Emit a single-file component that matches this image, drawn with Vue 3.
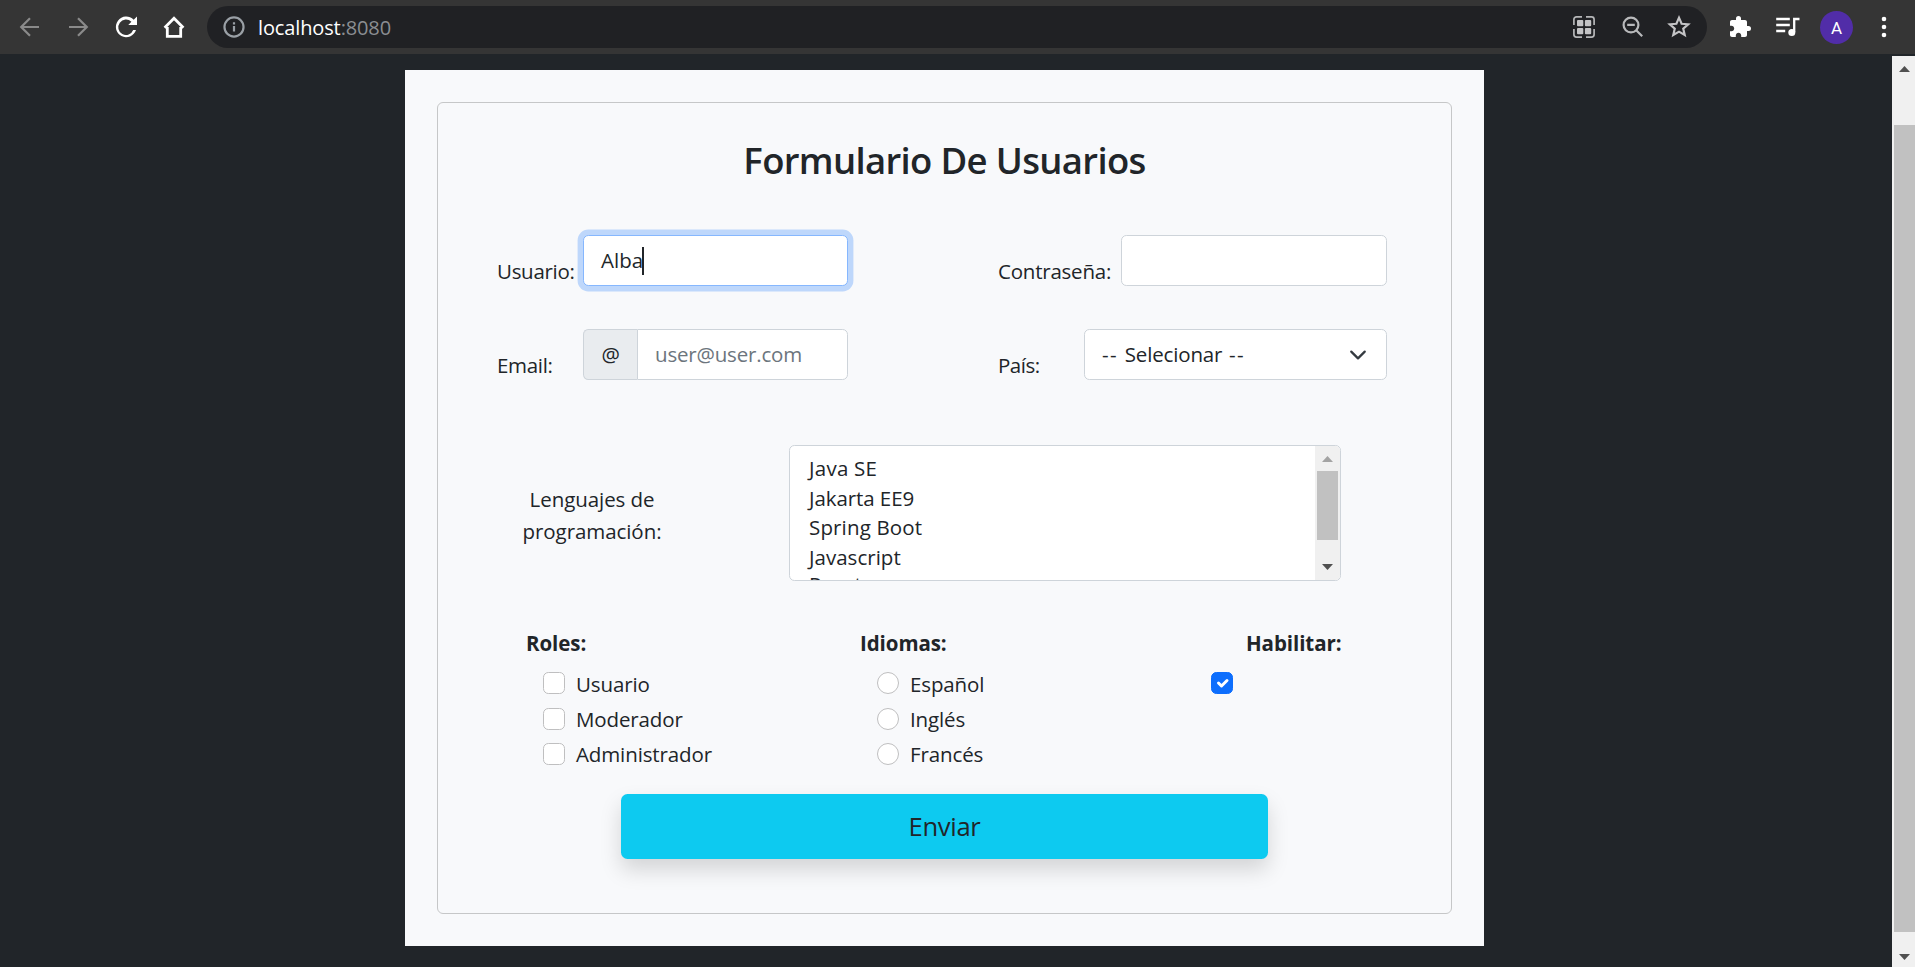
<script setup>
const languages = [
  { name: 'Java SE', fit: 'f-java' },
  { name: 'Jakarta EE9', fit: 'f-jakarta' },
  { name: 'Spring Boot', fit: 'f-spring' },
  { name: 'Javascript', fit: 'f-script' },
  { name: 'React', fit: 'f-script' }
]
const roles = ['Usuario', 'Moderador', 'Administrador']
const idiomas = ['Español', 'Inglés', 'Francés']
</script>

<template>
  <div class="window">
    <header class="toolbar">
      <svg class="ico nav dim" viewBox="0 0 24 24"><path d="M21 12H3.500M12 3.200 3.200 12l8.800 8.800" /></svg>
      <svg class="ico nav dim" viewBox="0 0 24 24"><path d="M3 12h17.500M12 3.200 20.800 12 12 20.800" /></svg>
      <svg class="ico nav fill" viewBox="0 0 24 24"><path d="M19.700 4.850A10.300 10.300 0 1 0 22 15h-2.800a7.700 7.700 0 1 1-1.800-8.200L14.300 10H23V1.500z" /></svg>
      <svg class="ico nav home" viewBox="0 0 24 24"><path d="M5.300 12v9.300h13.400V12M2.600 12.700 12 3.200l9.400 9.500" /></svg>
      <div class="omnibox">
        <svg class="ico info" viewBox="0 0 24 24"><circle cx="12" cy="12" r="10.400" /><path d="M12 11v6M12 6.800v2.400" /></svg>
        <span class="url">localhost<i>:8080</i></span>
        <svg class="ico qr" viewBox="0 0 24 24">
          <path class="ln" d="M1.900 10V4.500a2.600 2.600 0 0 1 2.600-2.600H10M14 1.900h5.500a2.600 2.600 0 0 1 2.600 2.600V10M22.100 14v5.500a2.600 2.600 0 0 1-2.600 2.600H14M10 22.100H4.500a2.600 2.600 0 0 1-2.600-2.600V14" />
          <g class="fl">
            <rect x="5" y="5" width="6.300" height="6.300" rx="1" /><rect x="12.900" y="5" width="6.300" height="6.300" rx="1" />
            <rect x="5" y="12.900" width="6.300" height="6.300" rx="1" /><rect x="12.900" y="12.900" width="6.300" height="6.300" rx="1" />
          </g>
        </svg>
        <svg class="ico zoom" viewBox="0 0 22 22"><circle cx="9" cy="9" r="7.400" /><path d="M14.200 14.200l6 6M5.200 8.800h7.600" /></svg>
        <svg class="ico star" viewBox="0 0 24 24"><path d="M12 3.400l2.400 5.600 6.100.5-4.600 4 1.400 5.900L12 16.300l-5.300 3.100 1.400-5.900-4.600-4 6.100-.5z" /></svg>
      </div>
      <svg class="ico puzzle" viewBox="0 0 24 24"><path d="M20.500 11H19V7c0-1.100-.9-2-2-2h-4V3.500a2.500 2.500 0 0 0-5 0V5H4c-1.100 0-1.990.9-1.990 2v3.800H3.500c1.490 0 2.700 1.210 2.700 2.700s-1.210 2.700-2.700 2.700H2V20c0 1.100.9 2 2 2h3.800v-1.500c0-1.490 1.210-2.700 2.700-2.700s2.700 1.210 2.700 2.700V22H17c1.100 0 2-.9 2-2v-4h1.500a2.500 2.500 0 0 0 0-5z" /></svg>
      <svg class="ico music" viewBox="0 0 26 22"><path class="ln" d="M1.200 3h13.600M1.200 9h13.600M1.200 15h9" /><path class="ln" d="M19.200 16V3h5.300" /><circle cx="16.800" cy="16.500" r="3.500" /></svg>
      <div class="avatar">A</div>
      <svg class="ico dots" viewBox="0 0 6 24"><circle cx="3" cy="4" r="2.300" /><circle cx="3" cy="12" r="2.300" /><circle cx="3" cy="20" r="2.300" /></svg>
    </header>

    <div class="viewport">
      <main class="page">
        <section class="card">
          <div class="frame">
            <h1><span>Formulario De Usuarios</span></h1>

            <div class="row">
              <div class="field left">
                <label>Usuario:</label>
                <div class="control focused"><span class="typed">Alba</span><b class="caret"></b></div>
              </div>
              <div class="field right">
                <label class="wide">Contraseña:</label>
                <div class="control"></div>
              </div>
            </div>

            <div class="row second">
              <div class="field left">
                <label>Email:</label>
                <div class="group">
                  <div class="addon">@</div>
                  <div class="control joined"><span class="placeholder">user@user.com</span></div>
                </div>
              </div>
              <div class="field right">
                <label class="tight">País:</label>
                <div class="control select">
                  <span class="value"><i>-- </i>Selecionar<i> --</i></span>
                  <svg viewBox="0 0 16 16"><path d="M2 5l6 6 6-6" /></svg>
                </div>
              </div>
            </div>

            <div class="languages">
              <div class="caption">Lenguajes de<br />programación:</div>
              <div class="listbox">
                <ul>
                  <li v-for="l in languages" :key="l.name"><span :class="l.fit">{{ l.name }}</span></li>
                </ul>
                <div class="bar">
                  <svg viewBox="0 0 11 6"><path fill="#a3a3a3" d="M0 6 5.500 0 11 6z" /></svg>
                  <div class="thumb"></div>
                  <svg class="down" viewBox="0 0 11 6"><path fill="#505050" d="M0 0h11L5.500 6z" /></svg>
                </div>
              </div>
            </div>

            <div class="choices">
              <div class="choice">
                <strong>Roles:</strong>
                <div v-for="r in roles" :key="r" class="option"><i class="box"></i><span>{{ r }}</span></div>
              </div>
              <div class="choice">
                <strong>Idiomas:</strong>
                <div v-for="i in idiomas" :key="i" class="option"><i class="box round"></i><span>{{ i }}</span></div>
              </div>
              <div class="choice enable">
                <strong>Habilitar:</strong>
                <div class="option">
                  <i class="box checked"><svg viewBox="0 0 20 20"><path d="M6.500 10l3 3 5.500-5.500" /></svg></i>
                </div>
              </div>
            </div>

            <div class="submit">Enviar</div>
          </div>
        </section>
      </main>
      <aside class="page-bar">
        <svg viewBox="0 0 11 6"><path fill="#505050" d="M0 6 5.500 0 11 6z" /></svg>
        <div class="thumb"></div>
        <svg class="down" viewBox="0 0 11 6"><path fill="#505050" d="M0 0h11L5.500 6z" /></svg>
      </aside>
    </div>
  </div>
</template>

<style>
body { background: #212529; overflow: hidden; }
</style>

<style scoped>
* { box-sizing: border-box; }
.window {
  width: 1915px; height: 967px; display: flex; flex-direction: column; overflow: hidden;
  background: #212529; color: #212529;
  font-family: "Open Sans", "Noto Sans", sans-serif; font-size: 20.500px; letter-spacing: -0.300px; white-space: nowrap;
}
svg { display: block; flex: none; overflow: visible; }

.toolbar { height: 54px; flex: none; display: flex; align-items: center; background: #353535; padding-left: 18px; }
.ico { width: 24px; height: 24px; fill: none; stroke: #fff; stroke-width: 2.400; }
.nav { margin-right: 24px; }
.dim { stroke: #8a8a8a; stroke-width: 2.200; }
.fill { fill: #fff; stroke: none; }
.home { stroke-width: 2.800; margin-right: 21px; }
.omnibox { width: 1500px; height: 42px; flex: none; border-radius: 21px; background: #202124; display: flex; align-items: center; padding-left: 16px; }
.info { width: 22px; height: 22px; stroke: #9aa0a6; }
.url { flex: none; margin-left: 13px; width: 1301px; color: #fff; font-size: 20px; letter-spacing: -0.130px; line-height: 40px; padding-top: 1px; }
.url i { font-style: normal; color: #8b8e92; }
.qr { width: 24px; stroke: #b5b6b8; margin-left: 13px; }
.qr .ln { stroke-width: 1.700; }
.qr .fl { fill: #c4c4c6; stroke: none; }
.zoom { margin-left: 26px; width: 22px; height: 22px; stroke: #b8b9bb; stroke-width: 2.200; }
.star { margin-left: 22px; width: 26px; height: 26px; stroke: #c4c4c6; stroke-width: 2; }
.puzzle { margin-left: 21px; fill: #fff; stroke: none; }
.music { margin-left: 23px; width: 26px; height: 22px; }
.music .ln { stroke-width: 2.300; }
.music circle { fill: #fff; stroke: none; }
.avatar { margin-left: 19px; width: 33px; height: 33px; border-radius: 50%; background: #512da8; color: #fff; text-align: center; font: 17px/34px Roboto, sans-serif; letter-spacing: 0; }
.dots { width: 6px; height: 24px; margin-left: 28px; fill: #fff; stroke: none; }

.viewport { flex: 1; display: flex; padding-top: 2px; }
.page { width: 1892px; padding: 14px 0 0 405px; }
.card { width: 1079px; height: 876px; background: #f8f9fb; padding: 32px; }
.frame { height: 812px; border: 1px solid #c6c7c8; border-radius: 6px; padding-top: 34px; }
h1 { margin: 0 0 52px; height: 46px; line-height: 46px; font-size: 36.500px; font-weight: 600; text-align: center; letter-spacing: -0.670px; }

.row { display: flex; padding-left: 60px; height: 51px; }
.second { margin-top: 43px; }
.field { display: flex; }
.left { width: 350px; margin-right: 151px; }
.right { width: 388px; }
label { width: 85px; padding-top: 20px; line-height: 32px; height: 51px; text-indent: -1px; }
.wide { width: 122px; letter-spacing: -0.220px; }
.tight { letter-spacing: -0.500px; }
.control { flex: 1; display: flex; align-items: center; height: 51px; line-height: 49px; background: #fff; border: 1px solid #ced4da; border-radius: 5.400px; padding-left: 17px; }
.typed { letter-spacing: 0.050px; }
.focused { border-color: #86b7fe; box-shadow: 0 0 0 5.400px #bed7fb; }
.caret { width: 2px; height: 28px; background: #212529; margin-left: -1px; }
.group { flex: 1; display: flex; }
.addon { width: 54px; height: 51px; line-height: 49px; text-align: center; background: #e9ecef; border: 1px solid #ced4da; border-right: 0; border-radius: 5.400px 0 0 5.400px; }
.joined { border-radius: 0 5.400px 5.400px 0; padding-left: 17px; }
.placeholder { color: #6c757d; letter-spacing: -0.180px; }
.value { white-space: pre; letter-spacing: -0.150px; }
.value i { font-style: normal; letter-spacing: 1.400px; }
.select svg { width: 18px; height: 18px; margin-left: auto; margin-right: 19px; }
.select path { fill: none; stroke: #343a40; stroke-width: 2; stroke-linecap: round; stroke-linejoin: round; }

.languages { display: flex; margin-top: 65px; padding-left: 60px; height: 136px; }
.caption { width: 188px; margin-right: 103px; padding-top: 38px; line-height: 32px; text-align: center; letter-spacing: -0.070px; }
.listbox { width: 552px; height: 136px; display: flex; overflow: hidden; background: #fff; border: 1px solid #ced4da; border-radius: 5.400px; }
ul { flex: 1; margin: 0; padding: 8px 0 0 19px; list-style: none; }
li { height: 29.500px; line-height: 29.500px; }
li:last-child { margin-top: -2px; }
.f-java { letter-spacing: 0.250px; }
.f-jakarta { letter-spacing: -0.080px; }
.f-spring { letter-spacing: 0.150px; }
.f-script { letter-spacing: 0.020px; }
.bar { width: 25px; background: #f0f0f0; padding: 10px 2px 10px; display: flex; flex-direction: column; align-items: center; }
.bar svg, .page-bar svg { width: 11px; height: 6px; }
.bar .thumb { width: 21px; height: 69px; margin-top: 9px; background: #c1c1c1; }
.down { margin-top: auto; }

.choices { display: flex; height: 145px; margin-top: 46px; padding-left: 89px; }
.choice { width: 334px; flex: none; }
.enable { width: 200px; }
strong { display: block; height: 40px; line-height: 32px; font-weight: 700; letter-spacing: -0.080px; text-indent: -1px; }
.option { display: flex; height: 35.200px; line-height: 35.200px; padding: 0 0 0 16px; letter-spacing: -0.120px; }
.box { width: 22px; height: 22px; margin: 5.400px 11px 0 0; border: 1px solid #bfbfc0; border-radius: 5.400px; background: #fff; }
.round { border-radius: 50%; }
.checked { background: #0d6efd; border-color: #0d6efd; }
.checked path { fill: none; stroke: #fff; stroke-width: 3; stroke-linecap: round; stroke-linejoin: round; }
.enable strong { padding-left: 52px; }

.submit { width: 647px; height: 65px; margin: 22px 0 0 183px; line-height: 66px; text-align: center; background: #0dcaf0; border-radius: 6.500px; box-shadow: 0 10.800px 21.600px rgba(0, 0, 0, 0.150); font-size: 25.600px; }

.page-bar { width: 23px; background: #f0f0f0; padding: 10px 0 7px 2px; display: flex; flex-direction: column; align-items: flex-start; }
.page-bar svg { margin-left: 5px; }
.page-bar .thumb { width: 21px; height: 807px; margin-top: 53px; background: #c1c1c1; }
</style>
